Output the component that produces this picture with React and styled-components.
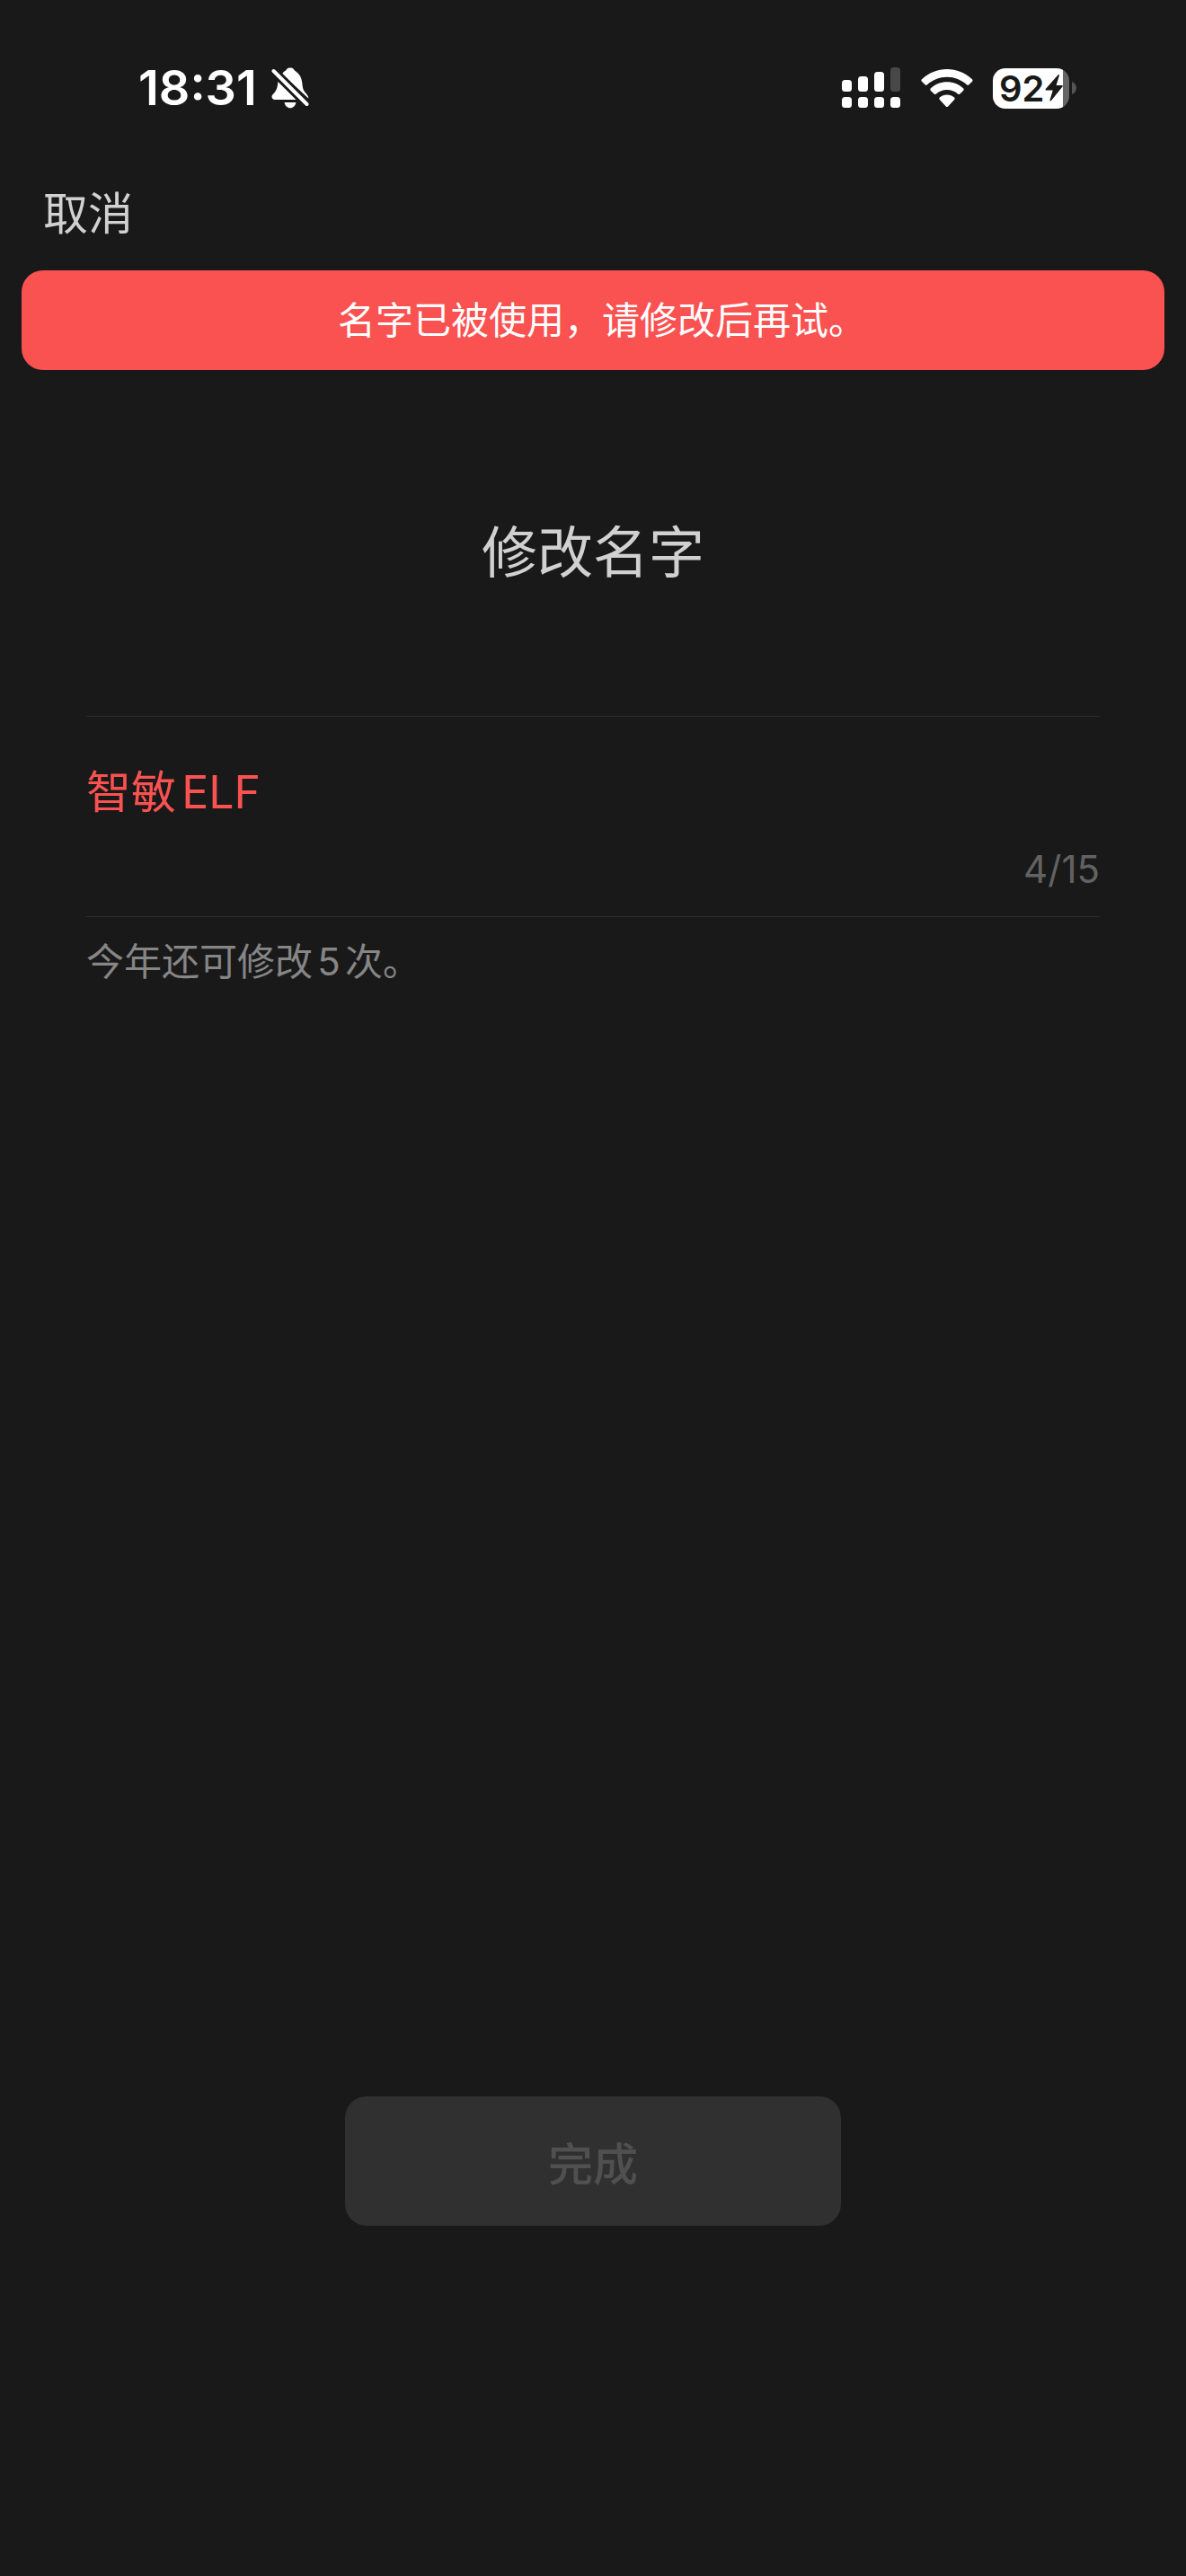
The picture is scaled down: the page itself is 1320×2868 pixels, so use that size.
import React, { useState } from 'react';
import styled, { createGlobalStyle } from 'styled-components';

const colors = {
  background: '#191919',
  text: '#d1d1d1',
  muted: '#868686',
  faint: '#626262',
  line: '#2e2e2e',
  danger: '#fa5151',
  disabled: '#303030',
  disabledText: '#505050',
};

const GlobalStyle = createGlobalStyle`
    * {
        box-sizing: border-box;
    }

    body {
        margin: 0;
        background-color: ${colors.background};
    }

    body, button, input {
        font-family: Inter, "Noto Sans CJK SC", sans-serif;
        text-autospace: normal;
    }
`;

const Screen = styled.div`
    display: flex;
    flex-direction: column;
    min-height: 100vh;
    color: ${colors.text};
`;

const StatusBar = styled.header`
    display: flex;
    justify-content: space-between;
    align-items: center;
    height: 196px;
    padding: 0 122px 0 154px;
    color: #fff;
`;

const StatusGroup = styled.div`
    display: flex;
    align-items: center;
    gap: ${({ $gap }) => $gap}px;

    svg {
        display: block;
    }
`;

const Time = styled.time`
    font-size: 54px;
    font-weight: 600;
    line-height: 64px;
`;

const NavBar = styled.nav`
    display: flex;
    padding: 0 48px;
    height: 105px;
`;

const CancelButton = styled.button`
    height: 84px;
    padding: 0;
    border: 0;
    background: none;
    color: ${colors.text};
    font-size: 50px;
    line-height: 84px;
`;

// the closing full stop leaves its right half empty, so the text is padded back to the middle
const Banner = styled.div`
    margin: 0 24px;
    padding: 24px 0 24px 20px;
    border-radius: 24px;
    background-color: ${colors.danger};
    color: #fff;
    font-size: 42px;
    line-height: 63px;
    text-align: center;
`;

const Form = styled.form`
    display: flex;
    flex: 1;
    flex-direction: column;
    padding: 156px 96px 390px;
`;

const Title = styled.h1`
    margin: 0 0 133px;
    font-size: 62px;
    font-weight: 400;
    line-height: 96px;
    text-align: center;
`;

const Field = styled.div`
    display: flex;
    flex-direction: column;
    border-top: 1px solid ${colors.line};
    border-bottom: 1px solid ${colors.line};
    padding: 48px 0 24px;
`;

const NameInput = styled.input`
    width: 100%;
    height: 72px;
    padding: 0;
    border: 0;
    outline: 0;
    background: none;
    color: ${colors.danger};
    font-size: 50px;
    line-height: 72px;
`;

const Counter = styled.output`
    margin-top: 22px;
    color: ${colors.faint};
    font-size: 42px;
    line-height: 56px;
    text-align: right;
`;

const Hint = styled.p`
    margin: 20px 0 0;
    color: ${colors.muted};
    font-size: 42px;
    line-height: 60px;
`;

const SubmitButton = styled.button`
    align-self: center;
    width: 552px;
    height: 144px;
    margin-top: auto;
    border: 0;
    border-radius: 24px;
    background-color: ${colors.disabled};
    color: ${colors.disabledText};
    font-size: 50px;
    font-weight: 500;
`;

const BatteryBox = styled.div`
    display: flex;
    align-items: center;
    gap: 3px;
`;

const BatteryBody = styled.div`
    display: flex;
    align-items: center;
    width: 85px;
    height: 45px;
    padding-left: 7px;
    border-radius: 14px;
    background: linear-gradient(to right, #fff 78px, #666 78px);
    color: ${colors.background};
`;

const BatteryLevel = styled.span`
    font-size: 40px;
    font-weight: 600;
    line-height: 45px;
`;

const BellOffIcon = () => (
  <svg width="42" height="46" viewBox="0 0 42 46" fill="currentColor" aria-label="静音">
    <path d="M12 7.5C14 4 16 4 16.500 3C17.500 1 19 .5 21 .5s3.500.5 4.500 2.500c.5 1 2.500 1.500 5 4.500C33 10.500 34 14 34.500 19c.5 6 2 7.500 4.500 10.500 2 2.500 2.500 3.500 2.200 5L12 7.500Z" />
    <path d="M7.500 15.500 28.500 36H4c-2 0-3.500-1.500-3.500-3 0-2.500 2-3.500 3.800-6 2-3 2.500-5 3.200-11.500Z" />
    <path d="M14.500 39h13c-.7 3.800-3.300 6.300-6.500 6.300s-5.800-2.500-6.500-6.300Z" />
    <path d="M2.500 4 39.500 41" fill="none" stroke="#191919" strokeWidth="10" />
    <path d="M2.500 4 39.500 41" fill="none" stroke="currentColor" strokeWidth="4" strokeLinecap="round" />
  </svg>
);

const SignalIcon = () => (
  <svg width="66" height="46" viewBox="0 0 66 46" fill="currentColor" aria-label="信号">
    <rect x="0" y="14" width="11" height="13" rx="3.500" />
    <rect x="18" y="10" width="11" height="17" rx="3.500" />
    <rect x="36" y="5" width="11" height="22" rx="3.500" />
    <rect x="54" y="0" width="11" height="27" rx="3.500" fill="#484848" />
    <rect x="0" y="33" width="11" height="12" rx="3.500" />
    <rect x="18" y="33" width="11" height="12" rx="3.500" />
    <rect x="36" y="33" width="11" height="12" rx="3.500" />
    <rect x="54" y="33" width="11" height="12" rx="3.500" />
  </svg>
);

const WifiIcon = () => (
  <svg width="58" height="43" viewBox="0 0 58 43" fill="currentColor" aria-label="无线网络">
    <path d="M29 0C39.500 0 49.500 4 57 11.200c.8.8.8 1.800 0 2.500l-3.600 3.600c-.7.7-1.700.7-2.400 0C45 11.700 37.200 8.700 29 8.700s-16 3-22 8.600c-.7.7-1.700.7-2.400 0L1 13.700c-.8-.7-.8-1.800 0-2.500C8.500 4 18.500 0 29 0Z" />
    <path d="M29 14.300c6.800 0 13.200 2.500 18.100 7 .8.800.8 1.800 0 2.600l-3.700 3.600c-.7.700-1.600.7-2.400 0A18 18 0 0 0 29 23a18 18 0 0 0-12 4.500c-.8.700-1.700.7-2.400 0l-3.700-3.600c-.8-.8-.8-1.800 0-2.600 4.900-4.500 11.300-7 18.100-7Z" />
    <path d="M29 28.500c3 0 5.900 1.100 8.100 3 .8.700.8 1.700 0 2.500l-6.900 7.500c-.7.700-1.700.7-2.400 0L20.900 34c-.8-.8-.8-1.800 0-2.500 2.200-1.900 5.100-3 8.100-3Z" />
  </svg>
);

const BoltIcon = () => (
  <svg width="20" height="30" viewBox="0 0 20 30" fill="currentColor" aria-hidden="true">
    <path d="M14.500.5c.8-.8 1.700-.3 1.400.8L12.600 12h6.200c1 0 1.300.8.700 1.600L7 29c-.8.900-1.900.4-1.500-.8L8.800 17.500H1.500c-1 0-1.300-.8-.7-1.600L14.500.5Z" />
  </svg>
);

const BatteryCap = () => (
  <svg width="5" height="14" viewBox="0 0 5 14" fill="#555" aria-hidden="true">
    <path d="M0 0c3 1 5 3.700 5 7s-2 6-5 7V0Z" />
  </svg>
);

const Battery = ({ level }) => (
  <BatteryBox>
    <BatteryBody>
      <BatteryLevel>{level}</BatteryLevel>
      <BoltIcon />
    </BatteryBody>
    <BatteryCap />
  </BatteryBox>
);

// a wide character counts as one, a latin character as a half
const countName = (name) => {
  const units = Array.from(name).reduce((sum, c) => sum + (c.charCodeAt(0) > 255 ? 2 : 1), 0);
  return Math.ceil(units / 2);
};

const App = () => {
  const [name, setName] = useState('智敏ELF');

  return (
    <Screen>
      <GlobalStyle />
      <StatusBar>
        <StatusGroup $gap={16}>
          <Time>18:31</Time>
          <BellOffIcon />
        </StatusGroup>
        <StatusGroup $gap={22}>
          <SignalIcon />
          <WifiIcon />
          <Battery level={92} />
        </StatusGroup>
      </StatusBar>
      <NavBar>
        <CancelButton type="button">取消</CancelButton>
      </NavBar>
      <Banner role="alert">名字已被使用，请修改后再试。</Banner>
      <Form onSubmit={e => e.preventDefault()}>
        <Title>修改名字</Title>
        <Field>
          <NameInput
            id="name"
            aria-label="名字"
            value={name}
            onChange={e => setName(e.target.value)}
          />
          <Counter htmlFor="name">{`${countName(name)}/15`}</Counter>
        </Field>
        <Hint>今年还可修改5次。</Hint>
        <SubmitButton type="submit" disabled>完成</SubmitButton>
      </Form>
    </Screen>
  );
};

export default App;
